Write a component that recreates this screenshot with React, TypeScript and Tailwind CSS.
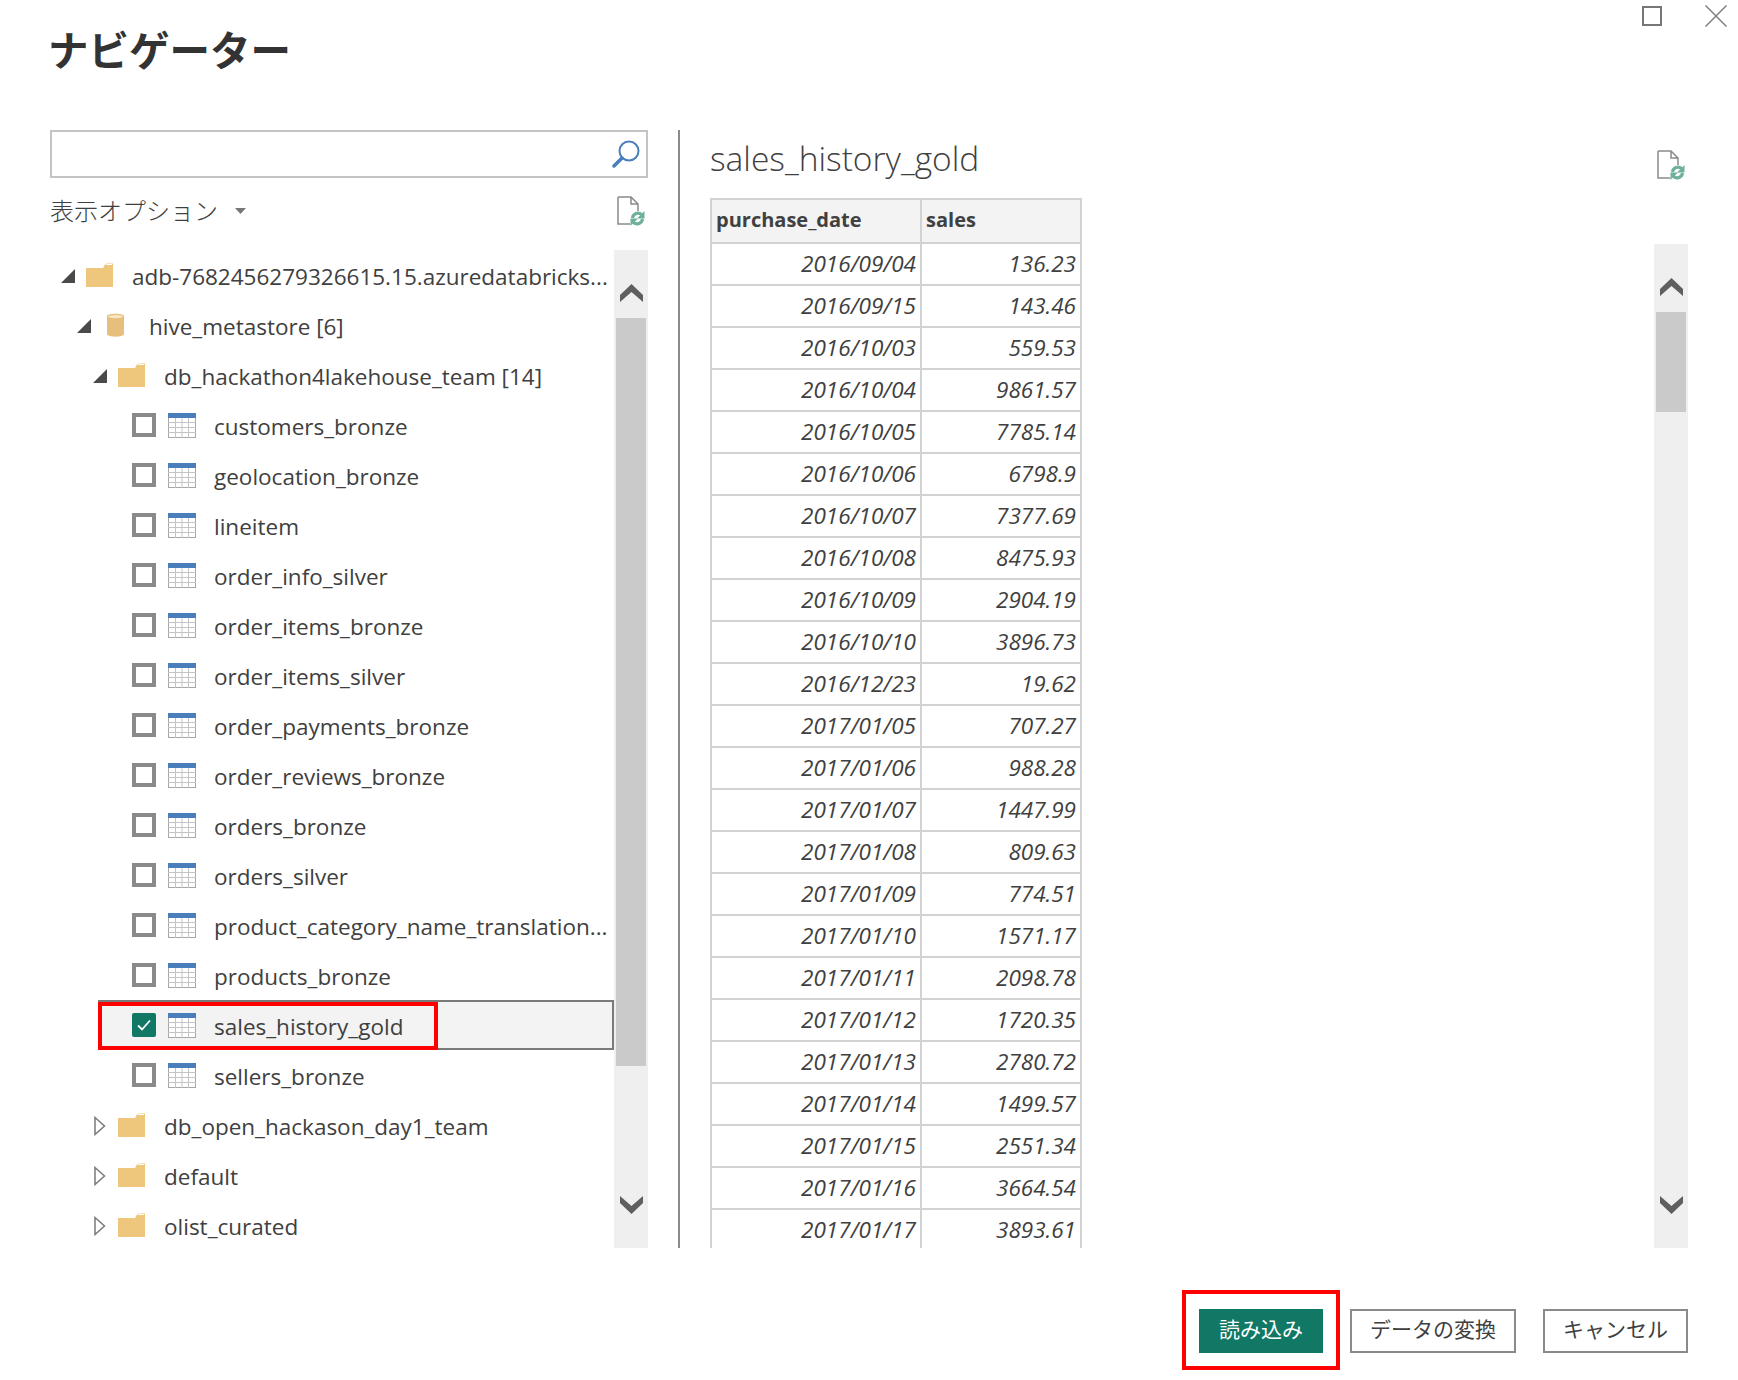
import type { ReactNode } from "react";

const ui = "font-['Open_Sans','Noto_Sans_CJK_JP',sans-serif]";

const tables = [
  "customers_bronze",
  "geolocation_bronze",
  "lineitem",
  "order_info_silver",
  "order_items_bronze",
  "order_items_silver",
  "order_payments_bronze",
  "order_reviews_bronze",
  "orders_bronze",
  "orders_silver",
  "product_category_name_translation...",
  "products_bronze",
  "sales_history_gold",
  "sellers_bronze",
];

const sales = [
  ["2016/09/04", "136.23"],
  ["2016/09/15", "143.46"],
  ["2016/10/03", "559.53"],
  ["2016/10/04", "9861.57"],
  ["2016/10/05", "7785.14"],
  ["2016/10/06", "6798.9"],
  ["2016/10/07", "7377.69"],
  ["2016/10/08", "8475.93"],
  ["2016/10/09", "2904.19"],
  ["2016/10/10", "3896.73"],
  ["2016/12/23", "19.62"],
  ["2017/01/05", "707.27"],
  ["2017/01/06", "988.28"],
  ["2017/01/07", "1447.99"],
  ["2017/01/08", "809.63"],
  ["2017/01/09", "774.51"],
  ["2017/01/10", "1571.17"],
  ["2017/01/11", "2098.78"],
  ["2017/01/12", "1720.35"],
  ["2017/01/13", "2780.72"],
  ["2017/01/14", "1499.57"],
  ["2017/01/15", "2551.34"],
  ["2017/01/16", "3664.54"],
  ["2017/01/17", "3893.61"],
];

function FolderIcon() {
  return (
    <svg width="27" height="24" viewBox="0 0 27 24" className="shrink-0">
      <path d="M0 5H17L19 1.5Q20 0.5 21 0.5H27V24H0Z" fill="#eec77d" />
      <path d="M20 1.5H26" stroke="#fff" strokeWidth="1" />
    </svg>
  );
}

function CylinderIcon() {
  return (
    <svg width="17" height="24" viewBox="0 0 17 24" className="ml-[5px] shrink-0">
      <path d="M0 3C0 0 17 0 17 3V21C17 24.5 0 24.5 0 21Z" fill="#e6bf7c" />
      <ellipse cx="8.5" cy="3.6" rx="7.5" ry="1.6" fill="#f8e6c5" />
    </svg>
  );
}

function TableIcon() {
  return (
    <svg width="28" height="25" viewBox="0 0 28 25" className="shrink-0">
      <rect x="0.5" y="0.5" width="27" height="24" fill="#fff" stroke="#a6a6a6" />
      <path d="M0 9.5H28M0 14.5H28M0 19.5H28M7.5 5V25M14 5V25M20.5 5V25" stroke="#c4c4c4" strokeWidth="1" />
      <rect width="28" height="5" fill="#4a7ebb" />
    </svg>
  );
}

function RefreshFileIcon() {
  return (
    <svg width="28" height="30" viewBox="0 0 28 30" className="shrink-0">
      <path d="M1 1H14L21 8V15M14 1V8H21M13 28H1V1" fill="none" stroke="#8a8a8a" strokeWidth="1.5" />
      <path d="M15.5 22A5.5 5.5 0 0 1 24.5 18.5" fill="none" stroke="#6fb09a" strokeWidth="3.2" />
      <path d="M27.5 15V22.5H20Z" fill="#6fb09a" />
      <path d="M25.5 23A5.5 5.5 0 0 1 16.5 26.5" fill="none" stroke="#6fb09a" strokeWidth="3.2" />
      <path d="M13.5 30V22.5H21Z" fill="#6fb09a" />
    </svg>
  );
}

function Chevron({ down }: { down?: boolean }) {
  return (
    <svg width="23" height="18" viewBox="0 0 23 18">
      <path
        d={down ? "M0 0L11.5 10L23 0V7L11.5 18L0 7Z" : "M0 18L11.5 8L23 18V11L11.5 0L0 11Z"}
        fill="#5f5f5f"
      />
    </svg>
  );
}

function Scrollbar({ thumbTop, thumbHeight, upPad }: { thumbTop: number; thumbHeight: number; upPad: number }) {
  return (
    <div className="relative h-full w-[34px] shrink-0 bg-[#efefef]">
      <div className="absolute inset-x-0 flex justify-center" style={{ top: upPad }}>
        <Chevron />
      </div>
      <div
        className="absolute inset-x-[2px] bg-[#cacaca]"
        style={{ top: thumbTop, height: thumbHeight }}
      />
      <div className="absolute inset-x-0 bottom-[34px] flex justify-center">
        <Chevron down />
      </div>
    </div>
  );
}

function Row({ indent, twisty, icon, gap, children }: { indent: number; twisty: ReactNode; icon: ReactNode; gap: number; children: ReactNode }) {
  return (
    <div className="flex h-[50px] items-center whitespace-nowrap" style={{ paddingLeft: indent }}>
      <div className="flex w-[25px] shrink-0 -translate-y-[1px] items-center">{twisty}</div>
      <div className="-translate-y-[2px]">{icon}</div>
      <span className="text-[22.5px] text-[#404040]" style={{ marginLeft: gap }}>{children}</span>
    </div>
  );
}

const openTwisty = (
  <svg width="14" height="14" viewBox="0 0 14 14">
    <path d="M14 0V14H0Z" fill="#4a4a4a" />
  </svg>
);

const closedTwisty = (
  <svg width="12" height="20" viewBox="0 0 12 20" className="ml-[1px]">
    <path d="M1 1.5L10.5 10L1 18.5Z" fill="#fff" stroke="#7a7a7a" strokeWidth="1.5" />
  </svg>
);

function TableRow({ name }: { name: string }) {
  const selected = name === "sales_history_gold";
  return (
    <div className="relative flex h-[50px] items-center whitespace-nowrap pl-[82px]">
      {selected && (
        <div className="absolute left-[48px] right-0 top-[-2px] h-[50px] border-2 border-[#7a7a7a] bg-[#f3f3f3]" />
      )}
      {selected ? (
        <div className="relative z-10 flex size-[24px] shrink-0 -translate-y-[2px] items-center justify-center rounded-[2px] bg-[#117865]">
          <svg width="16" height="14" viewBox="0 0 16 14">
            <path d="M2 7.5L6 11.5L14 2.5" fill="none" stroke="#fff" strokeWidth="1.8" />
          </svg>
        </div>
      ) : (
        <div className="size-[24px] shrink-0 -translate-y-[2px] border-[4px] border-[#8a8a8a] bg-white" />
      )}
      <div className="relative z-10 ml-[12px] -translate-y-[2px]">
        <TableIcon />
      </div>
      <span className="relative z-10 ml-[18px] text-[22.5px] text-[#404040]">{name}</span>
      {selected && (
        <div className="absolute left-[48px] top-0 z-20 h-[48px] w-[340px] border-[4px] border-[#ff0000]" />
      )}
    </div>
  );
}

function Button({ children, primary }: { children: ReactNode; primary?: boolean }) {
  return (
    <button
      className={
        primary
          ? "h-[44px] w-[124px] bg-[#117865] pb-[2px] text-[21px] text-white"
          : "h-[44px] w-full border-2 border-[#8a8a8a] bg-white pb-[2px] text-[21px] text-[#404040]"
      }
    >
      {children}
    </button>
  );
}

export default function App() {
  return (
    <div className={`flex h-[1380px] w-[1738px] flex-col overflow-hidden bg-white ${ui}`}>
      <header className="flex h-[130px] shrink-0 items-start justify-between pl-[48px] pr-[11px]">
        <h1 className="mt-[25px] text-[40.5px] font-bold leading-[52px] text-[#333]">ナビゲーター</h1>
        <div className="flex items-start gap-[43px] pt-[5px]">
          <div className="mt-[1px] size-[20px] border-2 border-[#777]" />
          <svg width="22" height="22" viewBox="0 0 22 22">
            <path d="M0.5 0.5L21.5 21.5M21.5 0.5L0.5 21.5" stroke="#808080" strokeWidth="1.5" />
          </svg>
        </div>
      </header>

      <main className="flex h-[1118px] shrink-0 overflow-hidden pl-[50px]">
        <section className="flex w-[598px] shrink-0 flex-col">
          <div className="flex h-[48px] shrink-0 items-center justify-end border-2 border-[#c4c4c4] pr-[6px]">
            <svg width="28" height="28" viewBox="0 0 28 28">
              <circle cx="17" cy="11" r="9.5" fill="none" stroke="#4a7ebb" strokeWidth="2" />
              <path d="M10 18L2 26" stroke="#4a7ebb" strokeWidth="3.5" strokeLinecap="round" />
            </svg>
          </div>
          <div className="flex h-[72px] shrink-0 items-start justify-between pr-[3px] pt-[18px]">
            <div className="flex -translate-y-[1px] items-center">
              <span className="text-[24px] font-light leading-[32px] text-[#404040]">表示オプション</span>
              <svg width="11" height="6" viewBox="0 0 11 6" className="ml-[17px]">
                <path d="M0 0H11L5.5 6Z" fill="#777" />
              </svg>
            </div>
            <RefreshFileIcon />
          </div>
          <div className="flex min-h-0 flex-1">
            <div className="min-w-0 flex-1 overflow-hidden pt-[2px]">
              <Row indent={11} twisty={openTwisty} icon={<FolderIcon />} gap={19}>
                adb-7682456279326615.15.azuredatabricks...
              </Row>
              <Row indent={27} twisty={openTwisty} icon={<CylinderIcon />} gap={25}>
                hive_metastore [6]
              </Row>
              <Row indent={43} twisty={openTwisty} icon={<FolderIcon />} gap={19}>
                db_hackathon4lakehouse_team [14]
              </Row>
              {tables.map((name) => (
                <TableRow key={name} name={name} />
              ))}
              <Row indent={43} twisty={closedTwisty} icon={<FolderIcon />} gap={19}>
                db_open_hackason_day1_team
              </Row>
              <Row indent={43} twisty={closedTwisty} icon={<FolderIcon />} gap={19}>
                default
              </Row>
              <Row indent={43} twisty={closedTwisty} icon={<FolderIcon />} gap={19}>
                olist_curated
              </Row>
            </div>
            <Scrollbar upPad={34} thumbTop={68} thumbHeight={748} />
          </div>
        </section>

        <div className="ml-[30px] w-[2px] shrink-0 bg-[#8a8a8a]" />

        <section className="ml-[30px] flex min-w-0 flex-1 pr-[50px]">
          <div className="min-w-0 flex-1">
            <h2 className="h-[68px] text-[33.5px] font-light leading-[56px] text-[#404040]">sales_history_gold</h2>
            <div className="w-[372px] border-x-2 border-t-2 border-[#d2d2d2] text-[22.5px] text-[#404040]">
              <div className="flex h-[44px] border-b-2 border-[#d2d2d2] bg-[#f3f3f3] text-[20px] font-bold">
                <div className="flex w-[210px] items-center border-r-2 border-[#d2d2d2] pb-[2px] pl-[4px]">purchase_date</div>
                <div className="flex flex-1 items-center pb-[2px] pl-[4px]">sales</div>
              </div>
              {sales.map(([date, value]) => (
                <div key={date} className="flex h-[42px] border-b-2 border-[#d2d2d2] italic">
                  <div className="flex w-[210px] items-center justify-end border-r-2 border-[#d2d2d2] pr-[4px]">{date}</div>
                  <div className="flex flex-1 items-center justify-end pr-[4px]">{value}</div>
                </div>
              ))}
            </div>
          </div>
          <div className="flex w-[34px] shrink-0 flex-col items-center">
            <div className="mt-[20px] h-[94px] shrink-0">
              <RefreshFileIcon />
            </div>
            <div className="min-h-0 flex-1">
              <Scrollbar upPad={34} thumbTop={68} thumbHeight={100} />
            </div>
          </div>
        </section>
      </main>

      <footer className="flex flex-1 items-start justify-end gap-[27px] pr-[50px] pt-[61px]">
        <div className="-my-[19px] border-[4px] border-[#ff0000] px-[13px] pb-[13px] pt-[15px]">
          <Button primary>読み込み</Button>
        </div>
        <div className="-ml-[17px] w-[166px]">
          <Button>データの変換</Button>
        </div>
        <div className="w-[145px]">
          <Button>キャンセル</Button>
        </div>
      </footer>
    </div>
  );
}
